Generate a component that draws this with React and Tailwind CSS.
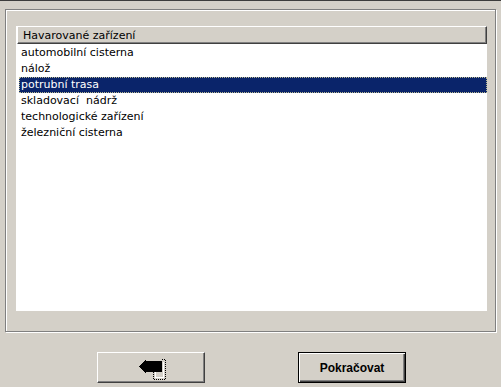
import React from "react";

const items = [
  "automobilní cisterna",
  "nálož",
  "potrubní trasa",
  "skladovací  nádrž",
  "technologické zařízení",
  "železniční cisterna",
];

function BackIcon() {
  return (
    <svg width="28" height="23" viewBox="0 0 28 23" shapeRendering="crispEdges">
      <path d="M17.5 14 V19.5 H25.5 V4" fill="none" stroke="#ffffff" strokeWidth="1" />
      <path d="M15.5 14 V21.5 H27.5 V1.5 H23" fill="none" stroke="#000000" strokeWidth="1" strokeDasharray="1 1" />
      <polygon points="1,8 8,1 8,3 24,3 24,14 8,14 8,16" fill="#000000" />
    </svg>
  );
}

export default function App() {
  return (
    <div
      className="w-[501px] h-[387px] bg-[#d4d0c8] border-t border-[#3c3c3c] overflow-hidden flex flex-col"
      style={{ fontFamily: '"DejaVu Sans", "Liberation Sans", sans-serif' }}
    >
      <div className="mt-[8px] ml-[5px] w-[491px] h-[323px] border border-[#808080] shadow-[inset_1px_1px_0_#ffffff,1px_1px_0_#ffffff] pl-[10px] pt-[16px]">
        <div className="w-[471px] h-[285px] bg-white flex flex-col">
          <div className="h-[18px] ml-[1px] bg-[#d4d0c8] border-t border-l border-white border-b border-r border-b-[#404040] border-r-[#404040] shadow-[inset_-1px_-1px_0_#808080] flex items-center pl-[5px] text-[11px] text-black leading-none">
            Havarované zařízení
          </div>
          <div className="flex flex-col mt-[1px]">
            {items.map((it) =>
              it === "potrubní trasa" ? (
                <div
                  key={it}
                  className="h-[16px] ml-[3px] bg-[#0a246a] border border-dotted border-[#b8b890] text-white text-[11px] leading-[14px] pl-[1px] whitespace-pre"
                >
                  {it}
                </div>
              ) : (
                <div
                  key={it}
                  className="h-[16px] ml-[3px] pl-[2px] text-black text-[11px] leading-[16px] whitespace-pre"
                >
                  {it}
                </div>
              )
            )}
          </div>
        </div>
      </div>
      <div className="mt-[20px] flex pl-[97px] gap-[93px]">
        <div className="w-[108px] h-[31px] border border-t-white border-l-white border-b-[#404040] border-r-[#404040] shadow-[inset_-1px_-1px_0_#808080] flex items-center justify-center pl-[1px] pt-[4px]">
          <BackIcon />
        </div>
        <div
          className="w-[108px] h-[31px] border border-black shadow-[inset_1px_1px_0_#ffffff,inset_-1px_-1px_0_#404040,inset_-2px_-2px_0_#808080] flex items-center justify-center text-[12px] font-bold text-black"
          style={{ fontFamily: '"Liberation Sans", Arial, sans-serif' }}
        >
          Pokračovat
        </div>
      </div>
    </div>
  );
}
